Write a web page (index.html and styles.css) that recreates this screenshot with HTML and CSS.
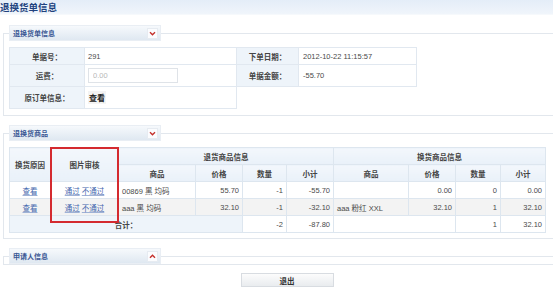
FILE: index.html
```html
<!DOCTYPE html>
<html lang="zh-CN">
<head>
    <meta charset="UTF-8">
    <title>退换货单信息</title>
    <link rel="stylesheet" href="styles.css">
</head>
<body>
    <div class="page-title">退换货单信息</div>

    <div class="page">
        <fieldset class="panel">
            <legend class="panel-tab">
                <span>退换货单信息</span>
                <svg class="toggle" width="11" height="11" viewBox="0 0 11 11"><rect x="0.5" y="0.5" width="10" height="10" fill="#fbfcfe" stroke="#e6ebf1"/><path d="M3 4.3 L5.5 6.8 L8 4.3" fill="none" stroke="#c4302b" stroke-width="1.4"/></svg>
            </legend>
            <table class="info-table">
                <tr>
                    <th>单据号：</th>
                    <td>291</td>
                    <th>下单日期：</th>
                    <td>2012-10-22 11:15:57</td>
                </tr>
                <tr>
                    <th>运费：</th>
                    <td><input class="fee-input" type="text" placeholder="0.00" disabled></td>
                    <th>单据金额：</th>
                    <td>-55.70</td>
                </tr>
                <tr class="tall">
                    <th>原订单信息：</th>
                    <td><span class="view-btn">查看</span></td>
                </tr>
            </table>
        </fieldset>

        <fieldset class="panel">
            <legend class="panel-tab">
                <span>退换货商品</span>
                <svg class="toggle" width="11" height="11" viewBox="0 0 11 11"><rect x="0.5" y="0.5" width="10" height="10" fill="#fbfcfe" stroke="#e6ebf1"/><path d="M3 4.3 L5.5 6.8 L8 4.3" fill="none" stroke="#c4302b" stroke-width="1.4"/></svg>
            </legend>
            <div class="goods-wrap">
                <table class="goods-table">
                    <colgroup>
                        <col style="width: 41px"><col style="width: 68px">
                        <col style="width: 77px"><col style="width: 47px"><col style="width: 44px"><col style="width: 47px">
                        <col style="width: 75px"><col style="width: 47px"><col style="width: 45px"><col style="width: 45px">
                    </colgroup>
                    <tr class="head">
                        <th rowspan="2">换货原因</th>
                        <th rowspan="2">图片审核</th>
                        <th colspan="4">退货商品信息</th>
                        <th colspan="4">换货商品信息</th>
                    </tr>
                    <tr class="head">
                        <th>商品</th><th>价格</th><th>数量</th><th>小计</th>
                        <th>商品</th><th>价格</th><th>数量</th><th>小计</th>
                    </tr>
                    <tr>
                        <td class="c"><a href="#">查看</a></td>
                        <td class="c"><a href="#">通过</a> <a href="#">不通过</a></td>
                        <td>00869 黑 均码</td>
                        <td class="r">55.70</td><td class="r">-1</td><td class="r">-55.70</td>
                        <td></td>
                        <td class="r">0.00</td><td class="r">0</td><td class="r">0.00</td>
                    </tr>
                    <tr class="alt">
                        <td class="c"><a href="#">查看</a></td>
                        <td class="c"><a href="#">通过</a> <a href="#">不通过</a></td>
                        <td>aaa 黑 均码</td>
                        <td class="r">32.10</td><td class="r">-1</td><td class="r">-32.10</td>
                        <td>aaa 粉红 XXL</td>
                        <td class="r">32.10</td><td class="r">1</td><td class="r">32.10</td>
                    </tr>
                    <tr>
                        <th colspan="4" class="sum-label">合计：</th>
                        <td class="r">-2</td><td class="r">-87.80</td>
                        <td colspan="2"></td>
                        <td class="r">1</td><td class="r">32.10</td>
                    </tr>
                </table>
                <div class="mark-box"></div>
            </div>
        </fieldset>

        <fieldset class="panel collapsed">
            <legend class="panel-tab">
                <span>申请人信息</span>
                <svg class="toggle" width="11" height="11" viewBox="0 0 11 11"><rect x="0.5" y="0.5" width="10" height="10" fill="#fbfcfe" stroke="#e6ebf1"/><path d="M3 6.7 L5.5 4.2 L8 6.7" fill="none" stroke="#c4302b" stroke-width="1.4"/></svg>
            </legend>
        </fieldset>

        <div class="actions">
            <button class="exit-btn" type="button">退出</button>
        </div>
    </div>
</body>
</html>
```

FILE: styles.css
```css
* {
    margin: 0;
    padding: 0;
    box-sizing: border-box;
}

html, body {
    width: 100%;
    overflow: hidden;
    background-color: #fff;
    font-family: "Liberation Sans", "Noto Sans CJK SC", sans-serif;
    font-size: 7.5px;
    color: #4a4a4a;
}

.page-title {
    height: 15px;
    line-height: 15px;
    font-size: 9.5px;
    font-weight: bold;
    color: #21427e;
    background: linear-gradient(#e4edf8, #f0f5fb);
    border-bottom: 1px solid #f6f9fc;
}

.page {
    width: 560px;
}

.panel {
    margin: 10px 0 0 3px;
    padding: 6px 5px 6px 5px;
    border: 1px solid #e2e7ed;
}

.panel + .panel {
    margin-top: 9px;
}

.panel:nth-of-type(2) {
    padding-bottom: 5px;
}

.panel.collapsed {
    padding: 0 5px;
}

.panel-tab {
    width: 152px;
    height: 16px;
    padding: 0 2px 0 3px;
    display: flex;
    align-items: center;
    justify-content: space-between;
    font-size: 7px;
    font-weight: bold;
    color: #3a5794;
    background: linear-gradient(#f6f9fc, #dfe8f1);
    border: 1px solid #e9eef4;
}

.toggle {
    display: block;
}

/* order info */
.info-table {
    border-collapse: collapse;
}

.info-table th,
.info-table td {
    border: 1px solid #e1e8f0;
    height: 22px;
    text-align: left;
    font-weight: normal;
}

.info-table tr:first-child th,
.info-table tr:first-child td {
    height: 17px;
}

.info-table th {
    background-color: #eef4fa;
    text-align: center;
    font-weight: bold;
    color: #444;
}

.info-table th:nth-child(1) { width: 75px; }
.info-table td:nth-child(2) { width: 152px; padding-left: 3px; }
.info-table th:nth-child(3) { width: 62px; }
.info-table td:nth-child(4) { width: 118px; padding-left: 4px; }

.fee-input {
    width: 90px;
    height: 15px;
    padding-left: 4px;
    border: 1px solid #dfe3e8;
    background-color: #fff;
    font-family: inherit;
    font-size: 7.5px;
}

.fee-input::placeholder {
    color: #b8b8b8;
}

.view-btn {
    display: inline-block;
    padding: 1px 1px;
    font-weight: bold;
    font-size: 8px;
    color: #222;
    background-color: #f4f4f4;
}

/* goods */
.goods-wrap {
    position: relative;
    width: 536px;
}

.goods-table {
    width: 536px;
    table-layout: fixed;
    border-collapse: collapse;
}

.goods-table th,
.goods-table td {
    height: 17px;
    border: 1px solid #dde6ef;
    padding: 0 3px;
    white-space: nowrap;
    overflow: hidden;
}

.goods-table th {
    font-weight: bold;
    color: #444;
    background: linear-gradient(#f3f7fc, #e9f1f9);
}

.goods-table .alt td {
    background-color: #f3f3f3;
}

.goods-table .c {
    text-align: center;
}

.goods-table .r {
    text-align: right;
}

.goods-table a {
    color: #4466ad;
    text-decoration: underline;
    text-decoration-color: #9fb2d6;
}

.goods-table .sum-label {
    background: #eef4fa;
}

.mark-box {
    position: absolute;
    left: 41px;
    top: 0;
    width: 69px;
    height: 76px;
    border: 2px solid #d42a2f;
}

.actions {
    display: flex;
    justify-content: center;
    padding-left: 14px;
    margin-top: 8px;
}

.exit-btn {
    width: 93px;
    height: 14px;
    border: 1px solid #d8dce1;
    background: linear-gradient(#fcfcfc, #e9ecef);
    font-family: inherit;
    font-size: 7.5px;
    font-weight: bold;
    color: #333;
}
```
